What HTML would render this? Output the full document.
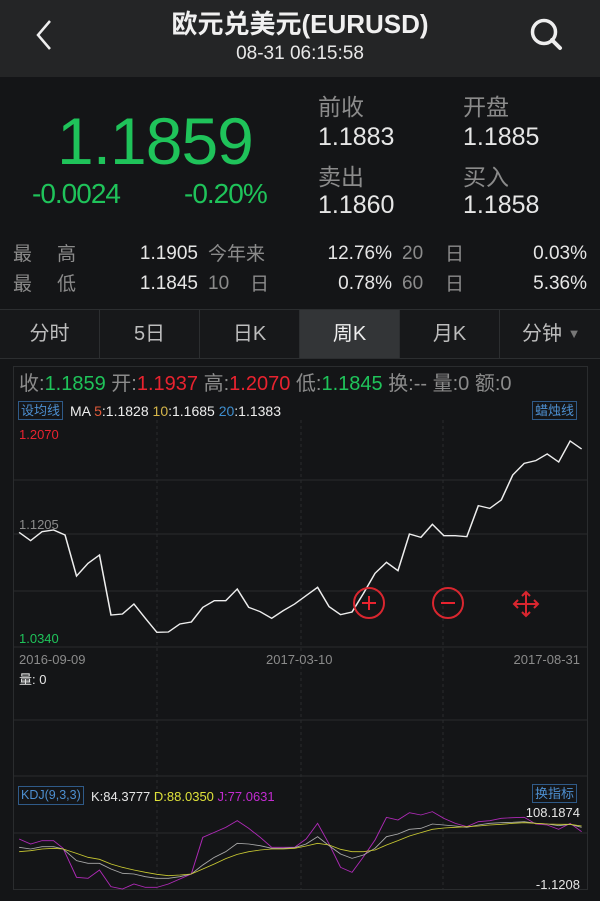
<!DOCTYPE html>
<html><head><meta charset="utf-8"><style>
*{margin:0;padding:0;box-sizing:border-box}
body{width:600px;height:901px;background:#141517;font-family:"Liberation Sans","Noto Sans CJK SC",sans-serif;color:#ddd;position:relative;overflow:hidden}
.a{position:absolute;white-space:nowrap;line-height:1}
.g{color:#1fc35a}.r{color:#e8232f}.gr{color:#8b8b8b}.w{color:#e6e6e6}
.tab{position:absolute;top:310px;height:48px;width:100px;border-right:1px solid #2c2e30;font-size:20px;color:#bdbdbd;text-align:center;line-height:48px}
</style></head><body>
<div class="a" style="left:0;top:0;width:600px;height:77px;background:#242526"></div>
<svg class="a" style="left:30px;top:18px" width="30" height="34"><path d="M20 3 L8 17 L20 31" stroke="#eee" stroke-width="2.5" fill="none"/></svg>
<div class="a" style="left:0;width:600px;text-align:center;top:11px;font-size:26px;font-weight:bold;color:#f0f0f0">欧元兑美元(EURUSD)</div>
<div class="a" style="left:0;width:600px;text-align:center;top:44px;font-size:19px;color:#e8e8e8">08-31 06:15:58</div>
<svg class="a" style="left:526px;top:14px" width="40" height="40"><circle cx="18" cy="18" r="11.5" stroke="#eee" stroke-width="3.5" fill="none"/><path d="M26 26 L34 34" stroke="#eee" stroke-width="4" stroke-linecap="round"/></svg>

<div class="a g" style="left:57px;top:108px;font-size:66px;letter-spacing:-1px">1.1859</div>
<div class="a g" style="left:32px;top:180px;font-size:28px;letter-spacing:-1px">-0.0024</div>
<div class="a g" style="left:184px;top:180px;font-size:28px;letter-spacing:-1px">-0.20%</div>
<div class="a gr" style="left:318px;top:96px;font-size:23px">前收</div>
<div class="a w" style="left:318px;top:125px;font-size:25px">1.1883</div>
<div class="a gr" style="left:463px;top:96px;font-size:23px">开盘</div>
<div class="a w" style="left:463px;top:125px;font-size:25px">1.1885</div>
<div class="a gr" style="left:318px;top:166px;font-size:23px">卖出</div>
<div class="a w" style="left:318px;top:193px;font-size:25px">1.1860</div>
<div class="a gr" style="left:463px;top:166px;font-size:23px">买入</div>
<div class="a w" style="left:463px;top:193px;font-size:25px">1.1858</div>

<div style="font-size:19px">
<div class="a gr" style="left:13px;top:245px">最</div><div class="a gr" style="left:57px;top:245px">高</div>
<div class="a w" style="right:402px;top:244px">1.1905</div><div class="a gr" style="left:208px;top:245px">今年来</div>
<div class="a w" style="right:208px;top:244px">12.76%</div><div class="a gr" style="left:402px;top:244px">20</div><div class="a gr" style="left:445px;top:245px">日</div>
<div class="a w" style="right:13px;top:244px">0.03%</div>
<div class="a gr" style="left:13px;top:275px">最</div><div class="a gr" style="left:57px;top:275px">低</div>
<div class="a w" style="right:402px;top:274px">1.1845</div><div class="a gr" style="left:208px;top:274px">10</div><div class="a gr" style="left:250px;top:275px">日</div>
<div class="a w" style="right:208px;top:274px">0.78%</div><div class="a gr" style="left:402px;top:274px">60</div><div class="a gr" style="left:445px;top:275px">日</div>
<div class="a w" style="right:13px;top:274px">5.36%</div>
</div>

<div class="a" style="left:0;top:309px;width:600px;height:50px;background:#17181a;border-top:1px solid #2c2e30;border-bottom:1px solid #2c2e30"></div>
<div class="tab" style="left:0">分时</div>
<div class="tab" style="left:100px">5日</div>
<div class="tab" style="left:200px">日K</div>
<div class="tab" style="left:300px;background:#333537;color:#eee">周K</div>
<div class="tab" style="left:400px">月K</div>
<div class="tab" style="left:500px;border:none;text-align:left;padding-left:22px">分钟 <span style="font-size:13px;color:#777;position:relative;top:-2px">▼</span></div>

<div class="a" style="left:13px;top:366px;width:575px;height:524px;border:1px solid #2a2c2e"></div>
<div class="a" style="left:19px;top:374px;font-size:20px"><span class="gr">收:</span><span class="g">1.1859</span> <span class="gr">开:</span><span class="r">1.1937</span> <span class="gr">高:</span><span class="r">1.2070</span> <span class="gr">低:</span><span class="g">1.1845</span> <span class="gr">换:-- 量:0 额:0</span></div>
<div class="a" style="left:18px;top:401px;font-size:13px;color:#4d8fd0;border:1px solid #2f5a88;padding:2px 2px">设均线</div>
<div class="a" style="left:70px;top:404px;font-size:14px;color:#eee">MA <span style="color:#e05a3a">5</span>:1.1828 <span style="color:#d6b64a">10</span>:1.1685 <span style="color:#3f8fd0">20</span>:1.1383</div>
<div class="a" style="left:532px;top:401px;font-size:13px;color:#4d8fd0;border:1px solid #2f5a88;padding:2px 2px">蜡烛线</div>

<svg class="a" style="left:0;top:420px" width="600" height="470" viewBox="0 0 600 470">
<g stroke="#2a2c2e" stroke-width="1">
<line x1="14" y1="60" x2="587" y2="60"/><line x1="14" y1="114" x2="587" y2="114"/><line x1="14" y1="171" x2="587" y2="171"/><line x1="14" y1="227" x2="587" y2="227"/>
<line x1="14" y1="300" x2="587" y2="300"/><line x1="14" y1="356" x2="587" y2="356"/><line x1="14" y1="413" x2="587" y2="413"/>
</g>
<g stroke="#2a2c2e" stroke-dasharray="3,3"><line x1="157" y1="0" x2="157" y2="470"/><line x1="301" y1="0" x2="301" y2="470"/><line x1="443" y1="0" x2="443" y2="470"/></g>
</svg>
<div class="a r" style="left:19px;top:428px;font-size:13px">1.2070</div>
<div class="a gr" style="left:19px;top:518px;font-size:13px">1.1205</div>
<div class="a g" style="left:19px;top:632px;font-size:13px">1.0340</div>
<div class="a gr" style="left:19px;top:653px;font-size:13px">2016-09-09</div>
<div class="a gr" style="left:266px;top:653px;font-size:13px">2017-03-10</div>
<div class="a gr" style="right:20px;top:653px;font-size:13px">2017-08-31</div>
<div class="a w" style="left:19px;top:673px;font-size:13px">量:&nbsp;0</div>

<svg class="a" style="left:0;top:420px" width="600" height="270" viewBox="0 0 1568 810" preserveAspectRatio="none">
<polyline fill="none" stroke="#eee" stroke-width="4" points="50,337 80,362 110,335 140,330 170,345 200,468 230,430 260,405 290,585 320,582 350,552 380,595 410,637 440,636 470,612 500,606 530,562 560,542 590,542 620,507 650,562 680,575 710,595 740,572 770,552 800,527 830,502 860,560 890,584 920,576 950,520 980,460 1010,427 1040,452 1070,342 1100,352 1130,313 1160,347 1190,347 1220,350 1250,257 1280,265 1310,240 1340,165 1370,130 1400,122 1430,102 1460,126 1490,63 1520,87"/>
</svg>
<svg class="a" style="left:350px;top:584px" width="200" height="40">
<circle cx="19" cy="19" r="15" stroke="#d9262f" stroke-width="2" fill="none"/><path d="M12 19h14M19 12v14" stroke="#e8232f" stroke-width="2"/>
<circle cx="98" cy="19" r="15" stroke="#d9262f" stroke-width="2" fill="none"/><path d="M91 19h14" stroke="#e8232f" stroke-width="2"/>
<g stroke="#d9262f" stroke-width="2" fill="none"><path d="M176 8v24M164 20h24"/><path d="M172 12l4-4 4 4M172 28l4 4 4-4M168 16l-4 4 4 4M184 16l4 4-4 4"/></g>
</svg>

<div class="a" style="left:18px;top:786px;font-size:12.5px;color:#4d8fd0;border:1px solid #2f5a88;padding:2px 2px">KDJ(9,3,3)</div>
<div class="a" style="left:91px;top:790px;font-size:13px"><span class="w">K:84.3777</span> <span style="color:#dfe23a">D:88.0350</span> <span style="color:#c22bd0">J:77.0631</span></div>
<div class="a" style="left:532px;top:784px;font-size:13px;color:#4d8fd0;border:1px solid #2f5a88;padding:2px 2px">换指标</div>
<div class="a w" style="right:20px;top:806px;font-size:13px">108.1874</div>
<div class="a w" style="right:20px;top:878px;font-size:13px">-1.1208</div>
<svg class="a" style="left:0;top:770px" width="600" height="131" viewBox="0 0 1568 393" preserveAspectRatio="none">
<g fill="none" stroke-width="2.5">
<polyline stroke="#b02ab8" points="50,207 80,222 110,212 140,212 165,235 200,322 230,325 260,300 290,350 320,357 350,342 380,352 410,352 440,342 470,327 500,312 530,202 560,187 590,172 620,152 650,175 680,202 710,232 740,232 770,232 800,207 830,160 860,222 890,292 920,307 950,260 980,210 1010,142 1040,150 1070,128 1100,135 1130,125 1160,145 1190,160 1220,170 1250,155 1280,152 1310,145 1340,143 1370,142 1400,162 1430,165 1460,178 1490,160 1520,185"/>
<polyline stroke="#aaa" points="50,232 80,237 110,230 140,230 165,237 200,272 230,280 260,280 290,297 320,310 350,312 380,320 410,325 440,325 470,320 500,312 530,285 560,262 590,245 620,220 650,222 680,227 710,235 740,235 770,233 800,222 830,200 860,227 890,252 920,265 950,255 980,235 1010,200 1040,192 1070,178 1100,175 1130,162 1160,165 1190,168 1220,172 1250,165 1280,160 1310,158 1340,157 1370,155 1400,160 1430,162 1460,167 1490,163 1520,172"/>
<polyline stroke="#c9c932" points="50,245 80,242 110,237 140,235 165,237 200,250 230,262 260,268 290,282 320,292 350,300 380,307 410,313 440,317 470,315 500,312 530,297 560,282 590,266 620,253 650,245 680,240 710,237 740,237 770,235 800,228 830,220 860,225 890,238 920,245 950,245 980,240 1010,225 1040,212 1070,198 1100,188 1130,178 1160,174 1190,172 1220,170 1250,168 1280,165 1310,163 1340,160 1370,158 1400,160 1430,162 1460,163 1490,163 1520,168"/>
</g></svg>
</body></html>
